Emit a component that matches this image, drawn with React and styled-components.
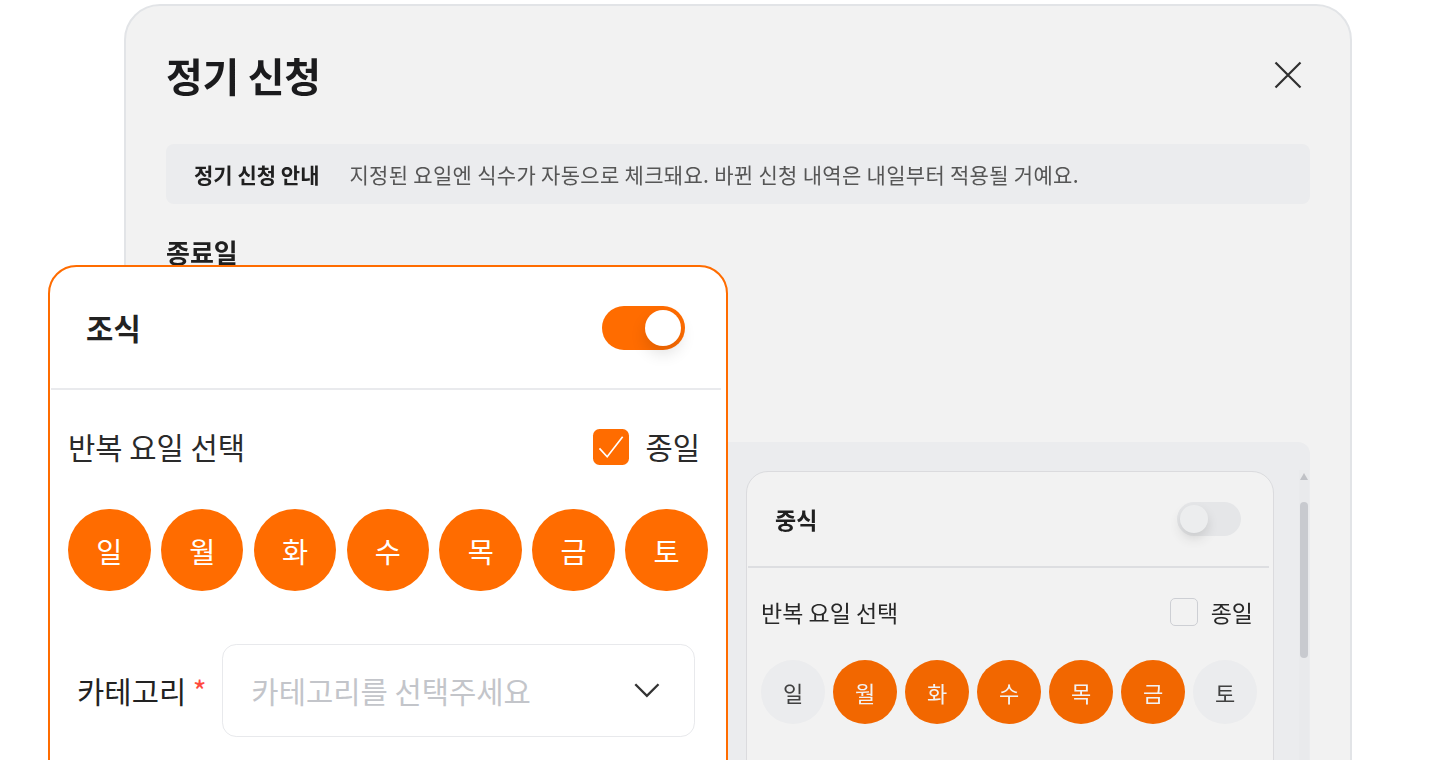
import React from "react";
import styled, { createGlobalStyle } from "styled-components";

const ORANGE = "#ff6c00";
const DAYS = ["일", "월", "화", "수", "목", "금", "토"];

const GlobalStyle = createGlobalStyle`
  html, body {
    margin: 0;
    padding: 0;
    background: #fff;
  }
  body {
    font-family: "Noto Sans CJK KR", "Noto Sans", sans-serif;
    color: #222;
    overflow: hidden;
  }
  * {
    box-sizing: border-box;
  }
`;

const Page = styled.div`
  position: relative;
  width: 1440px;
  height: 760px;
  overflow: hidden;
  padding: 4px 0 0 124px;
`;

const Modal = styled.div`
  width: 1228px;
  background: #fff;
  border: 2px solid #eef0f3;
  border-radius: 36px;
  padding: 44px 40px 0;
  filter: brightness(0.95);
  display: flex;
  flex-direction: column;
`;

const ModalHeader = styled.div`
  display: flex;
  justify-content: space-between;
  align-items: center;
  height: 50px;
`;

const Title = styled.h1`
  margin: 0;
  font-size: 40px;
  line-height: 50px;
  font-weight: 700;
  color: #1c1c1e;
  letter-spacing: -0.3px;
`;

const CloseButton = styled.button`
  border: 0;
  background: none;
  padding: 0;
  margin-right: 8px;
  width: 28px;
  height: 28px;
  display: flex;
  svg {
    display: block;
  }
`;

const Notice = styled.div`
  margin-top: 44px;
  height: 60px;
  border-radius: 8px;
  background: #f7f8fa;
  display: flex;
  align-items: center;
  gap: 30px;
  padding: 0 28px;
  font-size: 21px;
  white-space: nowrap;
  strong {
    font-weight: 700;
    color: #222;
  }
  span {
    color: #5a5a5a;
    letter-spacing: 0.3px;
  }
`;

const SectionLabel = styled.h2`
  margin: 31px 0 0;
  font-size: 26px;
  line-height: 34px;
  font-weight: 700;
  color: #222;
`;

const DateField = styled.div`
  margin-top: 12px;
  width: 520px;
  height: 56px;
  border: 1px solid #e6e7ea;
  border-radius: 10px;
  background: #fff;
`;

const MealPanel = styled.div`
  position: relative;
  margin-top: 105px;
  display: grid;
  grid-template-columns: 528px 528px;
  gap: 24px;
  padding: 29px 36px 60px 28px;
  background: #f7f8fa;
  border-radius: 12px 12px 0 0;
`;

const ScrollTrack = styled.div`
  position: absolute;
  right: 1px;
  top: 28px;
  bottom: 0;
  width: 10px;
  background: #f5f6f8;
  &::before {
    content: "";
    position: absolute;
    left: 1px;
    top: 3px;
    border-left: 4px solid transparent;
    border-right: 4px solid transparent;
    border-bottom: 7px solid #c9cbd0;
  }
  &::after {
    content: "";
    position: absolute;
    left: 1px;
    top: 32px;
    width: 8px;
    height: 156px;
    border-radius: 4px;
    background: #d3d5da;
  }
`;

const Spotlight = styled.div`
  position: absolute;
  left: 48px;
  top: 265px;
  z-index: 2;
`;

const Card = styled.div`
  width: ${(p) => (p.$active ? 527 : 528)}px;
  background: #fff;
  border: ${(p) => (p.$active ? `1.6px solid ${ORANGE}` : "1px solid #e6e7ea")};
  border-radius: 22px;
  overflow: hidden;
  zoom: ${(p) => (p.$active ? 1.29 : 1)};
  visibility: ${(p) => (p.$lifted ? "hidden" : "visible")};
`;

const CardHeader = styled.div`
  height: 94px;
  padding: 0 32px 0 28px;
  display: flex;
  justify-content: space-between;
  align-items: center;
`;

const MealTitle = styled.div`
  font-size: 23px;
  font-weight: 700;
  color: #222;
`;

const Toggle = styled.div`
  position: relative;
  width: 64px;
  height: 34px;
  border-radius: 17px;
  background: ${(p) => (p.$on ? ORANGE : "#f1f2f4")};
  &::after {
    content: "";
    position: absolute;
    top: 3px;
    left: ${(p) => (p.$on ? 33 : 3)}px;
    width: 28px;
    height: 28px;
    border-radius: 50%;
    background: ${(p) => (p.$on ? "#fff" : "#f8f9fa")};
    box-shadow: 0 6px 12px rgba(0, 0, 0, 0.12);
  }
`;

const Divider = styled.div`
  height: 1.5px;
  margin: 0 4px 0 1px;
  background: #e9eaed;
`;

const CardBody = styled.div`
  padding: 29px 16px 40px 14px;
`;

const RepeatRow = styled.div`
  display: flex;
  justify-content: space-between;
  align-items: center;
  padding-right: 4px;
  font-size: 23px;
  line-height: 30px;
  color: #2a2a2a;
`;

const AllDay = styled.label`
  display: flex;
  align-items: center;
  gap: 13px;
`;

const CheckBox = styled.span`
  width: 28px;
  height: 28px;
  border-radius: 5px;
  display: flex;
  align-items: center;
  justify-content: center;
  background: ${(p) => (p.$checked ? ORANGE : "#fff")};
  border: ${(p) => (p.$checked ? "none" : "1.5px solid #d8dadf")};
`;

const DayRow = styled.div`
  margin-top: 33px;
  display: flex;
  gap: 8px;
`;

const Day = styled.div`
  flex: none;
  width: 64px;
  height: 64px;
  border-radius: 50%;
  display: flex;
  align-items: center;
  justify-content: center;
  font-size: 22px;
  background: ${(p) => (p.$on ? ORANGE : "#f7f8fa")};
  color: ${(p) => (p.$on ? "#fff" : "#444")};
`;

const CategoryRow = styled.div`
  margin-top: 41px;
  padding-left: 7px;
  display: flex;
  align-items: center;
  gap: 12px;
`;

const FieldLabel = styled.span`
  font-size: 23px;
  color: #222;
  white-space: nowrap;
  em {
    font-style: normal;
    color: #ff4a3d;
    margin-left: 5px;
  }
`;

const Select = styled.div`
  width: 367px;
  height: 72px;
  border: 1.5px solid #e8e9ec;
  border-radius: 11px;
  display: flex;
  align-items: center;
  justify-content: space-between;
  padding: 0 27px 0 22px;
  font-size: 23px;
  color: #c3c5ca;
  white-space: nowrap;
`;

function MealCard({ name, on, allDay, days, active, lifted }) {
  return (
    <Card $active={active} $lifted={lifted}>
      <CardHeader>
        <MealTitle>{name}</MealTitle>
        <Toggle $on={on} />
      </CardHeader>
      <Divider />
      <CardBody>
        <RepeatRow>
          <span>반복 요일 선택</span>
          <AllDay>
            <CheckBox $checked={allDay}>
              {allDay && (
                <svg width="28" height="28" viewBox="0 0 28 28">
                  <path
                    d="M5 15 L11 21.5 L23 6"
                    fill="none"
                    stroke="#fff"
                    strokeWidth="1.3"
                  />
                </svg>
              )}
            </CheckBox>
            <span>종일</span>
          </AllDay>
        </RepeatRow>
        <DayRow>
          {DAYS.map((d, i) => (
            <Day key={d} $on={days.includes(i)}>
              {d}
            </Day>
          ))}
        </DayRow>
        <CategoryRow>
          <FieldLabel>
            카테고리<em>*</em>
          </FieldLabel>
          <Select>
            <span>카테고리를 선택주세요</span>
            <svg width="20" height="12" viewBox="0 0 20 12">
              <path
                d="M1 1 L10 10 L19 1"
                fill="none"
                stroke="#333"
                strokeWidth="1.8"
              />
            </svg>
          </Select>
        </CategoryRow>
      </CardBody>
    </Card>
  );
}

export default function App() {
  return (
    <>
      <GlobalStyle />
      <Page>
        <Modal>
          <ModalHeader>
            <Title>정기 신청</Title>
            <CloseButton aria-label="닫기">
              <svg width="28" height="28" viewBox="0 0 28 28">
                <path
                  d="M1.5 1.5 L26.5 26.5 M26.5 1.5 L1.5 26.5"
                  stroke="#333"
                  strokeWidth="2.2"
                />
              </svg>
            </CloseButton>
          </ModalHeader>
          <Notice>
            <strong>정기 신청 안내</strong>
            <span>
              지정된 요일엔 식수가 자동으로 체크돼요. 바뀐 신청 내역은 내일부터
              적용될 거예요.
            </span>
          </Notice>
          <SectionLabel>종료일</SectionLabel>
          <DateField />
          <MealPanel>
            <MealCard
              name="조식"
              on
              allDay
              lifted
              days={[0, 1, 2, 3, 4, 5, 6]}
            />
            <MealCard name="중식" days={[1, 2, 3, 4, 5]} />
            <ScrollTrack />
          </MealPanel>
        </Modal>
        <Spotlight>
          <MealCard
            name="조식"
            on
            allDay
            active
            days={[0, 1, 2, 3, 4, 5, 6]}
          />
        </Spotlight>
      </Page>
    </>
  );
}
